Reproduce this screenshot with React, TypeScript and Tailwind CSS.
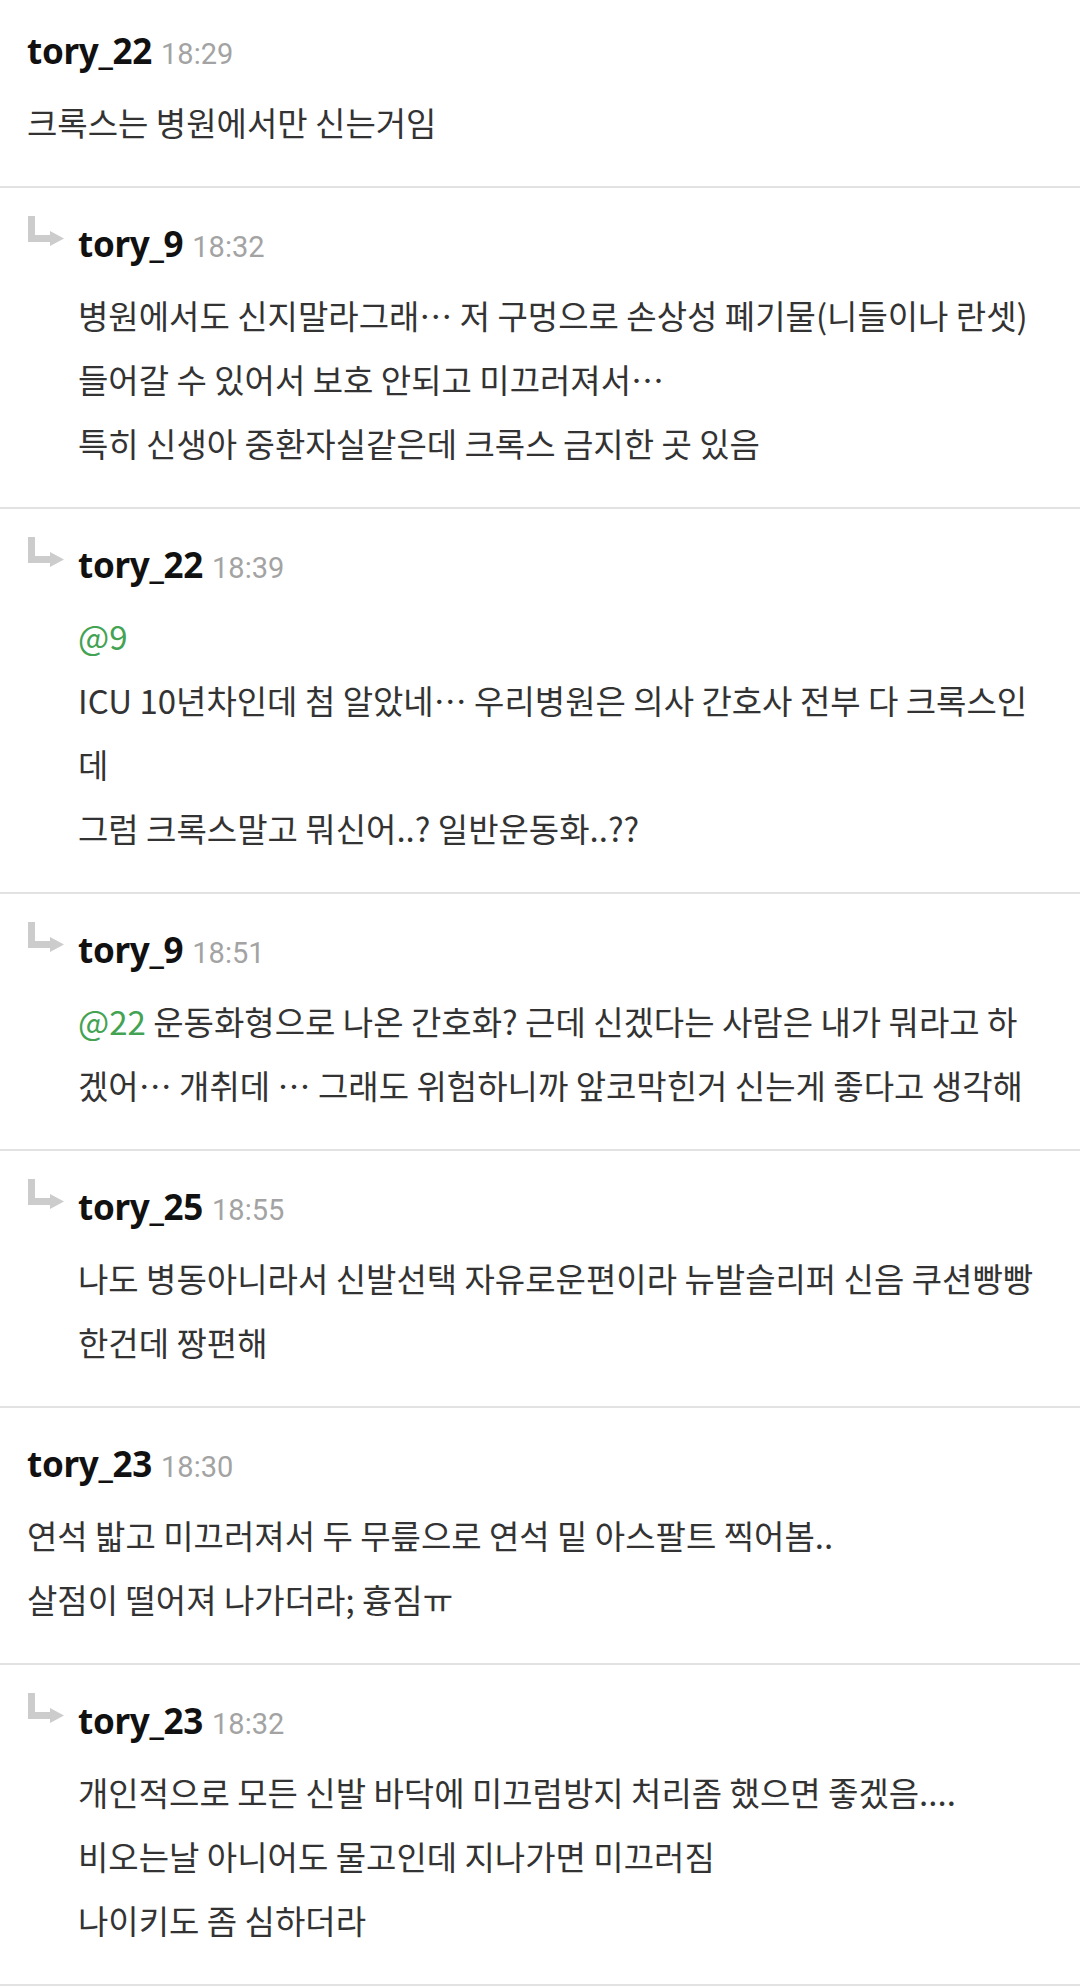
import React from 'react';

type Line = { mention?: string; text: string };

interface Comment {
  user: string;
  time: string;
  reply: boolean;
  lines: Line[];
}

const comments: Comment[] = [
  {
    user: 'tory_22',
    time: '18:29',
    reply: false,
    lines: [{ text: '크록스는 병원에서만 신는거임' }],
  },
  {
    user: 'tory_9',
    time: '18:32',
    reply: true,
    lines: [
      { text: '병원에서도 신지말라그래… 저 구멍으로 손상성 폐기물(니들이나 란셋)' },
      { text: '들어갈 수 있어서 보호 안되고 미끄러져서…' },
      { text: '특히 신생아 중환자실같은데 크록스 금지한 곳 있음' },
    ],
  },
  {
    user: 'tory_22',
    time: '18:39',
    reply: true,
    lines: [
      { mention: '@9', text: '' },
      { text: 'ICU 10년차인데 첨 알았네… 우리병원은 의사 간호사 전부 다 크록스인' },
      { text: '데' },
      { text: '그럼 크록스말고 뭐신어..? 일반운동화..??' },
    ],
  },
  {
    user: 'tory_9',
    time: '18:51',
    reply: true,
    lines: [
      { mention: '@22', text: ' 운동화형으로 나온 간호화? 근데 신겠다는 사람은 내가 뭐라고 하' },
      { text: '겠어… 개취데 … 그래도 위험하니까 앞코막힌거 신는게 좋다고 생각해' },
    ],
  },
  {
    user: 'tory_25',
    time: '18:55',
    reply: true,
    lines: [
      { text: '나도 병동아니라서 신발선택 자유로운편이라 뉴발슬리퍼 신음 쿠션빵빵' },
      { text: '한건데 짱편해' },
    ],
  },
  {
    user: 'tory_23',
    time: '18:30',
    reply: false,
    lines: [
      { text: '연석 밟고 미끄러져서 두 무릎으로 연석 밑 아스팔트 찍어봄..' },
      { text: '살점이 떨어져 나가더라; 흉짐ㅠ' },
    ],
  },
  {
    user: 'tory_23',
    time: '18:32',
    reply: true,
    lines: [
      { text: '개인적으로 모든 신발 바닥에 미끄럼방지 처리좀 했으면 좋겠음....' },
      { text: '비오는날 아니어도 물고인데 지나가면 미끄러짐' },
      { text: '나이키도 좀 심하더라' },
    ],
  },
];

function ReplyArrow() {
  return (
    <svg width="40" height="34" viewBox="0 0 40 34" className="shrink-0">
      <path d="M4.5 0 V22.5 H25" fill="none" stroke="#cccccc" strokeWidth="7" />
      <polygon points="23,15 37,22.5 23,30" fill="#cccccc" />
    </svg>
  );
}

function CommentItem({ comment, first }: { comment: Comment; first: boolean }) {
  return (
    <div
      className={`flex border-b-2 border-[#e2e2e2] pl-[27px] pr-4 pb-[32px] ${first ? 'pt-[23px]' : 'pt-[28px]'}`}
    >
      {comment.reply && (
        <div className="w-[51px] shrink-0">
          <ReplyArrow />
        </div>
      )}
      <div className="flex flex-col pt-[6px]">
        {/* Header */}
        <div className="flex h-[44px] items-baseline gap-[9px] leading-[44px]">
          <span className="font-['Noto_Sans','Noto_Sans_CJK_KR',sans-serif] text-[35px] font-bold tracking-[-0.3px] text-[#111111]">
            {comment.user}
          </span>
          <span className="font-['Roboto',sans-serif] text-[29px] text-[#a3a3a3]">{comment.time}</span>
        </div>

        {/* Body */}
        <div className="mt-[17px] flex flex-col font-['Noto_Sans_CJK_KR',sans-serif] text-[33px] text-[#333333]">
          {comment.lines.map((line, i) => (
            <div key={i} className="h-[64px] whitespace-pre leading-[64px]">
              {line.mention && <span className="text-[#43a353]">{line.mention}</span>}
              {line.text}
            </div>
          ))}
        </div>
      </div>
    </div>
  );
}

export default function App() {
  return (
    <div className="w-[1080px] bg-white">
      {comments.map((c, i) => (
        <CommentItem key={i} comment={c} first={i === 0} />
      ))}
    </div>
  );
}
